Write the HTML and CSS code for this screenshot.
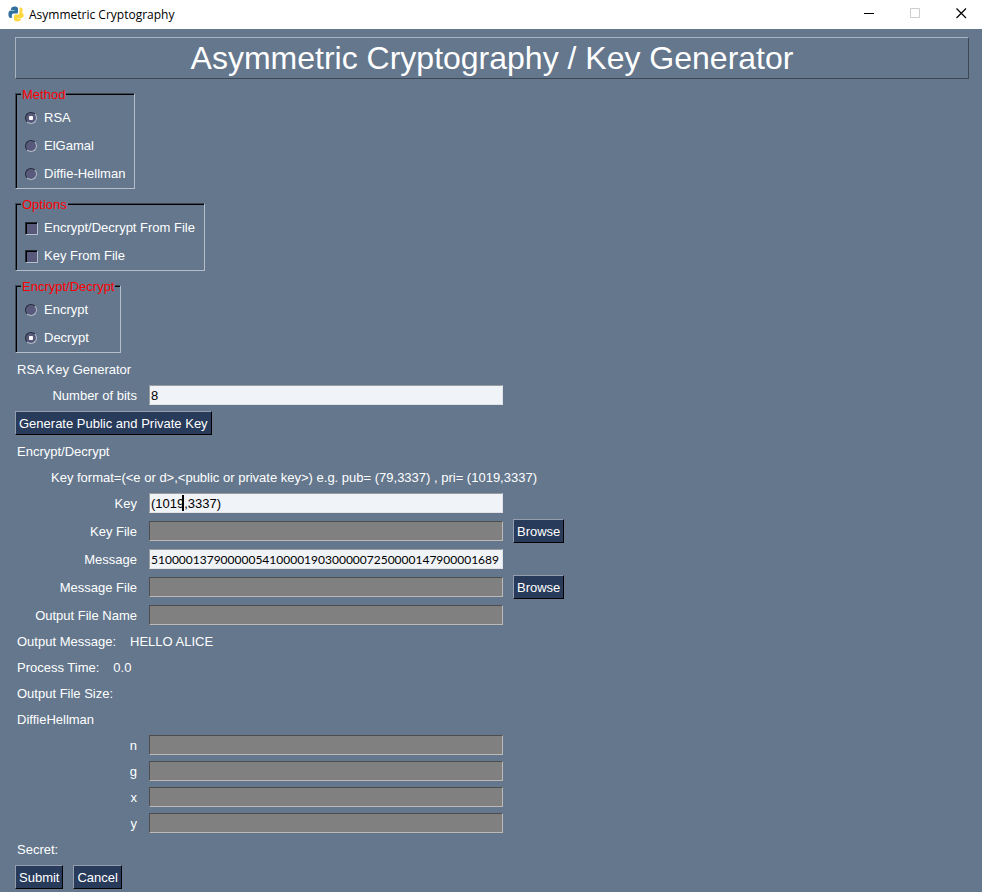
FILE: index.html
```html
<!DOCTYPE html>
<html lang="en">
<head>
<meta charset="utf-8">
<title>Asymmetric Cryptography</title>
<link rel="stylesheet" href="styles.css">
</head>
<body>
<header class="titlebar">
  <svg class="logo" width="16" height="16" viewBox="0 0 16 16" aria-hidden="true">
    <path fill="#34709f" d="M3 3C3 0 9.500-.3 10 2.500V6Q10 7.500 8.500 7.500H5.500Q3.800 7.500 3.800 9.500V12H2.500C-.3 12-.3 4.500 2.500 4.500H6.500V4H3Z"/>
    <path fill="#ffd740" d="M13 13C13 16 6.500 16.300 6 13.500V10Q6 8.500 7.500 8.500H10Q11.500 8.500 11.500 6.500V1.500H12.500C15 1.500 15 5 14 6.500C16.500 8 16 12 13.500 12H9.500V12.500H13Z"/>
  </svg>
  <span class="caption">Asymmetric Cryptography</span>
  <div class="window-controls">
    <button type="button" aria-label="Minimize"><svg width="11" height="11" viewBox="0 0 11 11"><path d="M0 5.500H10" stroke="#000"/></svg></button>
    <button type="button" aria-label="Maximize" disabled><svg width="11" height="11" viewBox="0 0 11 11"><path d="M.5.5H9.500V9.500H.5Z" fill="none" stroke="#ccc"/></svg></button>
    <button type="button" aria-label="Close"><svg width="11" height="11" viewBox="0 0 11 11"><path d="M.5.5 10 10M10 .5.5 10" stroke="#000" stroke-width="1.200"/></svg></button>
  </div>
</header>
<main>
  <h1>Asymmetric Cryptography / Key Generator</h1>
  <form>
    <fieldset>
      <legend>Method</legend>
      <label><input type="radio" name="method" checked>RSA</label>
      <label><input type="radio" name="method">ElGamal</label>
      <label><input type="radio" name="method">Diffie-Hellman</label>
    </fieldset>
    <fieldset>
      <legend>Options</legend>
      <label><input type="checkbox">Encrypt/Decrypt From File</label>
      <label><input type="checkbox">Key From File</label>
    </fieldset>
    <fieldset>
      <legend>Encrypt/Decrypt</legend>
      <label><input type="radio" name="mode">Encrypt</label>
      <label><input type="radio" name="mode" checked>Decrypt</label>
    </fieldset>

    <h2 class="row">RSA Key Generator</h2>
    <div class="row field"><label for="bits">Number of bits</label><input id="bits" type="text" value="8"></div>
    <div class="row actions"><button type="button">Generate Public and Private Key</button></div>

    <h2 class="row">Encrypt/Decrypt</h2>
    <p class="row hint">Key format=(&lt;e or d&gt;,&lt;public or private key&gt;) e.g. pub= (79,3337) , pri= (1019,3337)</p>
    <div class="row field"><label for="key">Key</label><div class="entry"><input id="key" type="text" value="(1019,3337)"><span class="caret"></span></div></div>
    <div class="row field tall"><label for="keyfile">Key File</label><input id="keyfile" type="text" disabled><button type="button">Browse</button></div>
    <div class="row field"><label for="message">Message</label><input id="message" class="cipher" type="text" value="51000013790000054100001903000007250000147900001689"></div>
    <div class="row field tall"><label for="messagefile">Message File</label><input id="messagefile" type="text" disabled><button type="button">Browse</button></div>
    <div class="row field"><label for="outfile">Output File Name</label><input id="outfile" type="text" disabled></div>
    <p class="row result"><span>Output Message:</span><output>HELLO ALICE</output></p>
    <p class="row result"><span>Process Time:</span><output>0.0</output></p>
    <p class="row result"><span>Output File Size:</span><output></output></p>

    <h2 class="row">DiffieHellman</h2>
    <div class="row field"><label for="n">n</label><input id="n" type="text" disabled></div>
    <div class="row field"><label for="g">g</label><input id="g" type="text" disabled></div>
    <div class="row field"><label for="x">x</label><input id="x" type="text" disabled></div>
    <div class="row field"><label for="y">y</label><input id="y" type="text" disabled></div>
    <p class="row result"><span>Secret:</span><output></output></p>
    <div class="row actions"><button type="submit">Submit</button><button type="button">Cancel</button></div>
  </form>
</main>
</body>
</html>
```
FILE: styles.css
```css
* { box-sizing: border-box; }

body {
  margin: 0;
  background: #64778d;
  color: #fff;
  font: 13px/16px "Liberation Sans", Arial, sans-serif;
}

.titlebar {
  display: flex;
  align-items: center;
  height: 29px;
  padding-left: 8px;
  background: #fff;
  color: #000;
}
.logo { margin: 0 5px 2px 0; }
.caption { font: 12px/16px "Open Sans", "Noto Sans", sans-serif; }
.window-controls { display: flex; align-self: flex-start; margin-left: auto; }
.window-controls button {
  display: grid;
  place-items: center;
  width: 46px;
  height: 27px;
  padding: 0 0 0 4px;
  border: 0;
  background: none;
}

main { padding: 8px 13px 0 15px; }

h1 {
  margin: 0 0 9px;
  border: 1px solid;
  border-color: #a8b3c1 #3c4755 #3c4755 #a8b3c1;
  font-size: 32px;
  line-height: 40px;
  font-weight: normal;
  text-align: center;
}

fieldset {
  width: fit-content;
  min-width: 0;
  margin: 0 0 9px;
  padding: 5px 5px 1px;
  border: 1px solid;
  border-color: #3c4755 #b4bdc9 #b4bdc9 #3c4755;
  box-shadow: inset 1px 1px #000;
}
fieldset:last-of-type { margin-bottom: 3px; }
legend {
  padding: 4px 1px 0;
  background: #64778d;
  color: #f00;
  line-height: 6px;
}
fieldset label {
  display: flex;
  align-items: center;
  gap: 6px;
  height: 28px;
  padding: 2px 4px 0;
}
fieldset input {
  appearance: none;
  display: grid;
  place-items: center;
  width: 13px;
  height: 13px;
  margin: 0;
  border: 1px solid;
  border-color: #222a38 #b4bdc9 #b4bdc9 #222a38;
  background: #59597c;
}
fieldset input[type="radio"] {
  width: 12px;
  height: 12px;
  margin-right: 1px;
  border-radius: 50%;
}
fieldset input[type="checkbox"] { box-shadow: inset 1px 1px #000; }
fieldset input[type="radio"]:checked::before {
  content: "";
  width: 4px;
  height: 4px;
  border-radius: 1px;
  background: #fff;
}

.row {
  display: flex;
  align-items: center;
  min-height: 26px;
  margin: 0;
}
h2.row {
  font-size: 13px;
  font-weight: normal;
}
h2.row, .result { padding: 2px 0 0 2px; }
.hint { padding: 2px 0 0 36px; }
.result { gap: 14px; }
.tall, .actions { min-height: 30px; }
.actions { gap: 10px; }

.field label {
  width: 122px;
  margin-right: 12px;
  padding-top: 2px;
  text-align: right;
}
.row input {
  width: 354px;
  height: 20px;
  padding: 0 1px;
  border: 1px solid;
  border-color: #999ca0 #e0e2e5 #e0e2e5 #999ca0;
  background: #f0f3f7;
  color: #000;
  font: inherit;
}
.row .cipher { font: 12px/16px Lato, "Liberation Sans", sans-serif; }
.row input:disabled {
  border-color: #4d4d4d #bdbab6 #bdbab6 #4d4d4d;
  background: #808080;
}
.entry { position: relative; display: flex; }
.caret {
  position: absolute;
  top: 2px;
  left: 33px;
  width: 2px;
  height: 16px;
  background: #000;
}

.row button {
  height: 24px;
  padding: 2px 3px 0;
  border: 1px solid;
  border-color: #939dad #000 #000 #939dad;
  background: #283b5b;
  color: #fff;
  font: inherit;
}
.field button { margin-left: 10px; }
```
